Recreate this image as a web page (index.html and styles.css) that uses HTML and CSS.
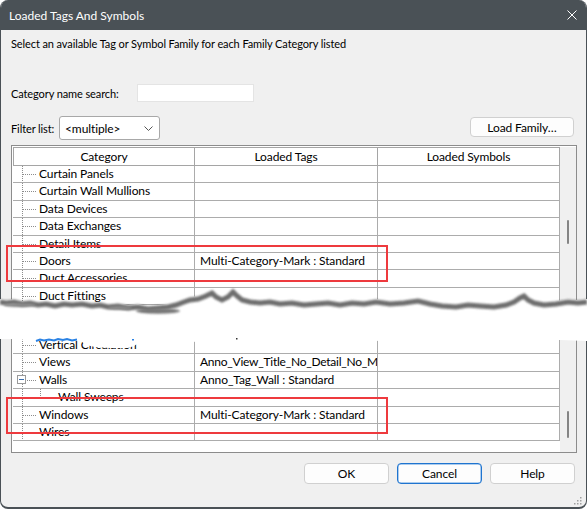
FILE: index.html
```html
<!DOCTYPE html>
<html lang="en">
<head>
    <meta charset="UTF-8">
    <title>Loaded Tags And Symbols</title>
    <link rel="stylesheet" href="styles.css">
</head>
<body>

<div class="dialog">
    <!-- upper piece of the dialog -->
    <div class="part part-top">
        <div class="titlebar">
            <span>Loaded Tags And Symbols</span>
            <svg class="close" width="10" height="10" viewBox="0 0 10 10"><path d="M0.5,0.5 L9.5,9.5 M9.5,0.5 L0.5,9.5" stroke="#fff" stroke-width="1" fill="none"/></svg>
        </div>
        <div class="content">
            <p class="intro">Select an available Tag or Symbol Family for each Family Category listed</p>

            <div class="search-row">
                <label for="search">Category name search:</label>
                <input type="text" id="search">
            </div>

            <div class="filter-row">
                <label>Filter list:</label>
                <div class="select">
                    <span>&lt;multiple&gt;</span>
                    <svg width="9" height="5" viewBox="0 0 9 5"><path d="M0.5,0.5 L4.5,4.5 L8.5,0.5" stroke="#555" fill="none"/></svg>
                </div>
                <button class="btn load-btn">Load Family…</button>
            </div>

            <div class="list list-top">
                <div class="grid">
                    <div class="head">
                        <div>Category</div>
                        <div>Loaded Tags</div>
                        <div>Loaded Symbols</div>
                    </div>
                    <div class="row"><div class="cat">Curtain Panels</div><div></div><div></div></div>
                    <div class="row"><div class="cat">Curtain Wall Mullions</div><div></div><div></div></div>
                    <div class="row"><div class="cat">Data Devices</div><div></div><div></div></div>
                    <div class="row"><div class="cat">Data Exchanges</div><div></div><div></div></div>
                    <div class="row"><div class="cat">Detail Items</div><div></div><div></div></div>
                    <div class="row"><div class="cat">Doors</div><div>Multi-Category-Mark : Standard</div><div></div></div>
                    <div class="row"><div class="cat">Duct Accessories</div><div></div><div></div></div>
                    <div class="row"><div class="cat">Duct Fittings</div><div></div><div></div></div>
                </div>
                <div class="scroll"><div class="thumb thumb-top"></div></div>
            </div>
        </div>
    </div>

    <div class="tear"></div>

    <!-- lower piece of the dialog -->
    <div class="part part-bottom">
        <div class="list list-bottom">
            <div class="grid">
                <div class="row"><div class="cat">Vertical Circulation</div><div></div><div></div></div>
                <div class="row"><div class="cat">Views</div><div class="tight">Anno_View_Title_No_Detail_No_Me</div><div></div></div>
                <div class="row"><div class="cat cat-open"><span class="toggle"></span>Walls</div><div>Anno_Tag_Wall : Standard</div><div></div></div>
                <div class="row"><div class="cat cat-child">Wall Sweeps</div><div></div><div></div></div>
                <div class="row"><div class="cat">Windows</div><div>Multi-Category-Mark : Standard</div><div></div></div>
                <div class="row"><div class="cat">Wires</div><div></div><div></div></div>
            </div>
            <div class="scroll"><div class="thumb thumb-bottom"></div></div>
        </div>

        <div class="buttons">
            <button class="btn">OK</button>
            <button class="btn btn-default">Cancel</button>
            <button class="btn">Help</button>
        </div>

        <svg class="grip" width="8" height="8" viewBox="0 0 8 8">
            <rect x="6" y="0" width="1.5" height="1.5"/>
            <rect x="3" y="3" width="1.5" height="1.5"/>
            <rect x="6" y="3" width="1.5" height="1.5"/>
            <rect x="0" y="6" width="1.5" height="1.5"/>
            <rect x="3" y="6" width="1.5" height="1.5"/>
            <rect x="6" y="6" width="1.5" height="1.5"/>
        </svg>
    </div>

    <!-- torn paper edge between the two pieces -->
    <svg class="torn" width="587" height="70" viewBox="0 0 587 70">
        <defs>
            <filter id="soft" x="-5%" y="-50%" width="110%" height="200%"><feGaussianBlur stdDeviation="1.3"/></filter>
        </defs>
        <path fill="#fff" d="M0,14 L6,15 L14,14 L22,16 L30,15 L38,17 L46,16 L55,18 L64,16 L72,17 L82,16 L92,18 L100,17 L108,19 L118,18 L128,20 L138,19 L148,21 L158,20 L168,19 L176,17 L184,14 L190,12 L198,11 L206,8 L212,5 L216,9 L222,12 L228,9 L233,4 L237,8 L242,12 L250,14 L260,15 L270,14 L280,16 L292,15 L304,17 L316,16 L328,15 L340,17 L352,15 L364,16 L376,14 L390,16 L404,15 L418,13 L430,16 L442,18 L456,19 L468,17 L480,18 L494,19 L506,17 L514,14 L520,10 L524,8 L528,12 L534,15 L544,17 L556,16 L568,14 L578,15 L587,14 L587,56 L560,55 L540,56 L520,54 L500,56 L470,55 L440,56 L410,55 L380,56 L360,55 L340,56 L300,55 L280,56 L250,55 L240,53 L236,55 L230,56 L200,57 L170,56 L140,57 L134,61 L128,63 L110,63 L95,62 L86,60 L82,57 L78,56 L60,56 L40,56 L30,55 L10,54 L0,54 Z"/>
        <path class="shadow" transform="translate(0,3)" d="M0,14 L6,15 L14,14 L22,16 L30,15 L38,17 L46,16 L55,18 L64,16 L72,17 L82,16 L92,18 L100,17 L108,19 L118,18 L128,20 L138,19 L148,21 L158,20 L168,19 L176,17 L184,14 L190,12 L198,11 L206,8 L212,5 L216,9 L222,12 L228,9 L233,4 L237,8 L242,12 L250,14 L260,15 L270,14 L280,16 L292,15 L304,17 L316,16 L328,15 L340,17 L352,15 L364,16 L376,14 L390,16 L404,15 L418,13 L430,16 L442,18 L456,19 L468,17 L480,18 L494,19 L506,17 L514,14 L520,10 L524,8 L528,12 L534,15 L544,17 L556,16 L568,14 L578,15 L587,14"/>
        <ellipse cx="158" cy="26" rx="22" ry="2.8" fill="#777" filter="url(#soft)"/>
        <ellipse cx="120" cy="23" rx="12" ry="2" fill="#888" filter="url(#soft)"/>
        <ellipse cx="20" cy="20" rx="16" ry="2" fill="#888" filter="url(#soft)"/>
        <path d="M36,56 L40,54.5 L44,55.5 L49,54.5 L54,55.5 L58,54 L63,55 L67,54 L72,55.5 L77,54.5" stroke="#2a82e4" stroke-width="2" fill="none"/>
        <rect x="132" y="54" width="2" height="1.5" fill="#2a82e4"/>
        <rect x="236" y="53" width="1.5" height="1.5" fill="#333"/>
    </svg>

    <div class="mark mark-doors"></div>
    <div class="mark mark-windows"></div>
</div>

</body>
</html>
```

FILE: styles.css
```css
/* page */
body {
    margin: 0;
    background-color: #ffffff;
    font-family: Lato, "Liberation Sans", sans-serif;
    font-size: 12px;
    letter-spacing: -0.1px;
    color: #000000;
}

.dialog {
    position: relative;
    width: 587px;
}

/* the two pieces of the window */
.part {
    background-color: #f0f0f0;
    border-left: 1px solid #4a5156;
    border-right: 1px solid #4a5156;
    box-sizing: border-box;
}

.part-top {
    height: 306px;
    overflow: hidden;
    border-radius: 8px 8px 0 0;
}

.part-bottom {
    position: relative;
    padding: 0 0 23px 10px;
    border-bottom: 2px solid #4a5156;
    border-radius: 0 0 8px 8px;
}

.tear {
    height: 31px;
    background-color: #ffffff;
}

.titlebar {
    height: 30px;
    background-color: #4a5156;
    color: #ffffff;
    letter-spacing: 0;
    display: flex;
    align-items: center;
    justify-content: space-between;
    padding: 0 9px 0 8px;
}

.content {
    padding: 6px 0 0 10px;
}

.intro {
    margin: 0;
    font-size: 11px;
    line-height: 16px;
}

.search-row {
    display: flex;
    align-items: center;
    height: 18px;
    margin-top: 32px;
}

.search-row label,
.filter-row label {
    font-size: 11px;
    white-space: nowrap;
    flex-shrink: 0;
}

.search-row label {
    width: 126px;
}

.search-row input {
    width: 117px;
    height: 18px;
    box-sizing: border-box;
    border: 1px solid #e4e4e4;
    background-color: #ffffff;
    padding: 0;
}

.filter-row {
    display: flex;
    align-items: center;
    height: 24px;
    margin-top: 14px;
}

.filter-row label {
    width: 48px;
}

.select {
    width: 101px;
    height: 24px;
    box-sizing: border-box;
    border: 1px solid #a8a8a8;
    border-radius: 3px;
    background-color: #ffffff;
    display: flex;
    align-items: center;
    justify-content: space-between;
    padding: 0 6px 0 5px;
}

.btn {
    font-family: inherit;
    font-size: 12px;
    letter-spacing: -0.1px;
    color: #000000;
    background-color: #fdfdfd;
    border: 1px solid #d0d0d0;
    border-radius: 4px;
    height: 21px;
    width: 85px;
    padding: 0;
}

.load-btn {
    margin-left: auto;
    margin-right: 12px;
    align-self: flex-start;
    margin-top: 1px;
    width: 104px;
    height: 20px;
}

.btn-default {
    border-color: #1f74cf;
    box-shadow: inset 0 0 0 0.5px #5a9be0;
}

/* list view */
.list {
    display: flex;
    margin-right: 9px;
    border: 1px solid #8c8c8c;
    background-color: #ffffff;
    padding-left: 1px;
}

.list-top {
    margin-top: 5px;
    border-bottom: none;
    padding-top: 1px;
    height: 200px;
}

.list-bottom {
    border-top: none;
    height: 115px;
}

.grid {
    width: 547px;
}

.head,
.row {
    display: grid;
    grid-template-columns: 182px 183px 182px;
}

.head div {
    height: 19px;
    line-height: 17px;
    box-sizing: border-box;
    text-align: center;
    border-top: 1px solid #a5a5a5;
    border-bottom: 1px solid #a5a5a5;
    border-right: 1px solid #a5a5a5;
}

.head div:first-child {
    border-left: 1px solid #a5a5a5;
}

.row {
    height: 17.4px;
    box-sizing: border-box;
    border-bottom: 1px solid #acacac;
}

.row div {
    border-right: 1px solid #acacac;
    padding-left: 5px;
    line-height: 16.4px;
    white-space: nowrap;
    overflow: hidden;
}

.row .tight {
    letter-spacing: -0.25px;
}

/* tree lines in the category column */
.row .cat {
    padding-left: 26px;
    background:
        repeating-linear-gradient(to bottom, #8c8c8c 0 1px, transparent 1px 2px) 9px 0 / 1px 100% no-repeat,
        repeating-linear-gradient(to right, #8c8c8c 0 1px, transparent 1px 2px) 10px 8px / 13px 1px no-repeat;
}

.row .cat-open {
    display: flex;
    align-items: center;
    padding-left: 4px;
}

.toggle {
    width: 9px;
    height: 9px;
    box-sizing: border-box;
    border: 1px solid #9a9a9a;
    background: linear-gradient(#3a6fb0, #3a6fb0) center / 5px 1px no-repeat, #ffffff;
    margin-right: 13px;
}

.row .cat-child {
    padding-left: 45px;
    background:
        repeating-linear-gradient(to bottom, #8c8c8c 0 1px, transparent 1px 2px) 9px 0 / 1px 100% no-repeat,
        repeating-linear-gradient(to bottom, #8c8c8c 0 1px, transparent 1px 2px) 27px 0 / 1px 9px no-repeat,
        repeating-linear-gradient(to right, #8c8c8c 0 1px, transparent 1px 2px) 28px 8px / 15px 1px no-repeat;
}

.scroll {
    flex: 1;
    background-color: #f0f0f0;
}

.thumb {
    width: 2px;
    margin-left: 7px;
    background-color: #858585;
    border-radius: 1px;
}

.thumb-top {
    margin-top: 73px;
    height: 24px;
}

.thumb-bottom {
    margin-top: 74px;
    height: 27px;
}

.buttons {
    display: flex;
    justify-content: flex-end;
    gap: 8px;
    margin-top: 10px;
    padding-right: 11px;
}

.grip {
    position: absolute;
    right: 4px;
    bottom: 2px;
    fill: #a0a0a0;
}

/* overlays */
.torn {
    position: absolute;
    left: 0;
    top: 285px;
}

.shadow {
    fill: none;
    stroke: #4a4a4a;
    stroke-width: 5;
    opacity: 0.8;
    filter: url(#soft);
}

.mark {
    position: absolute;
    left: 6px;
    width: 382px;
    height: 37px;
    box-sizing: border-box;
    border: 2px solid #ee3a3e;
}

.mark-doors {
    top: 245px;
}

.mark-windows {
    top: 397px;
}
```
